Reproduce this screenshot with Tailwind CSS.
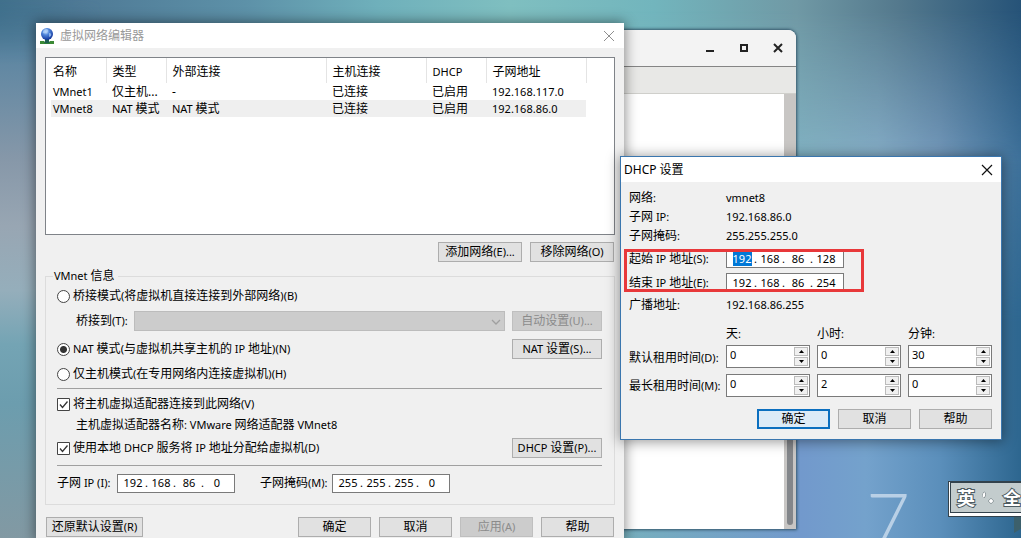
<!DOCTYPE html>
<html lang="zh-CN">
<head>
<meta charset="utf-8">
<meta name="viewport" content="width=device-width, initial-scale=1">
<title>虚拟网络编辑器</title>
<script src="https://cdn.jsdelivr.net/npm/@tailwindcss/browser@4"></script>
</head>
<body class="relative h-screen overflow-hidden bg-[#6f9db5] font-['Noto_Sans','Noto_Sans_CJK_SC',sans-serif] text-xs leading-4 text-black">

<!-- wallpaper -->
<div class="absolute inset-0 bg-[linear-gradient(90deg,#40708c_0%,#4f7a96_8%,#5d91a8_24%,#6fb0bb_37%,#7fbfc0_50%,#72b5bd_64%,#7099a5_78%,#54798d_88%,#265378_100%)]"></div>
<div class="absolute inset-0 bg-[linear-gradient(180deg,#40708c_0%,#5d86a2_10%,#8798a9_30%,#98a6b3_42%,#95aebb_54%,#74a4b4_64%,#6c9dae_75%,#8299a3_100%)] [mask-image:linear-gradient(180deg,transparent_0%,black_12%),linear-gradient(90deg,black_0%,black_4%,transparent_10%)] [mask-composite:intersect]"></div>
<div class="absolute inset-y-0 right-0 w-2/5 bg-[linear-gradient(90deg,#7ab4c0_30%,#82b0c2_50%,#84acc6_65%,#7398ba_80%,#3e719a_100%)] [mask-image:linear-gradient(180deg,transparent_2%,black_30%)]"></div>
<div class="absolute inset-y-0 right-0 w-2/5 bg-[linear-gradient(90deg,#76b0bc_0%,#7299cc_46%,#74a2cc_62%,#5b8fbb_80%,#2d668f_100%)] [mask-image:linear-gradient(180deg,transparent_30%,black_60%)]"></div>
<div aria-hidden="true" class="absolute top-[482px] left-[866px] font-[Lato] text-[76px] leading-[76px] font-light text-[#b9d0e6]">7</div>

<!-- terminal window in the background -->
<section class="absolute top-[30px] left-[560px] flex h-[499px] w-[236px] flex-col overflow-hidden rounded-tr-lg bg-white shadow-[0_0_3px_1px_#33556a]">
  <header class="flex h-9 shrink-0 items-center justify-end gap-6 bg-[#f3f3f3] pr-[13px]">
    <button aria-label="最小化" class="size-2.5"><svg viewBox="0 0 10 10" class="size-2.5"><path d="M1 8h8" stroke="#222" stroke-width="2"/></svg></button>
    <button aria-label="最大化" class="size-2.5"><svg viewBox="0 0 10 10" class="size-2.5"><path d="M2 2h6v6H2z" fill="none" stroke="#222" stroke-width="2"/></svg></button>
    <button aria-label="关闭窗口" class="size-2.5"><svg viewBox="0 0 10 10" class="size-2.5"><path d="M1 1l8 8M9 1l-8 8" stroke="#222" stroke-width="2"/></svg></button>
  </header>
  <div class="h-7 shrink-0 border-t border-b border-t-[#858585] border-b-[#cfcfcb] bg-[#e8e8e6]"></div>
  <div class="flex grow justify-end">
    <div class="flex w-3 items-end justify-center bg-[#c8c6c4] pb-1"><div class="h-24 w-1.5 rounded-full bg-[#83868a]"></div></div>
  </div>
</section>

<!-- virtual network editor -->
<main class="absolute top-[23px] left-9 w-[588px] bg-[#f0f0f0] shadow-[0_0_12px_1px_rgba(0,0,0,0.45)]">
  <header class="flex h-[25px] items-center bg-white pr-[9px] pl-[3px] text-[#999]">
    <svg viewBox="0 0 16 18" class="mr-[5px] h-[18px] w-4"><defs><radialGradient id="g" cx=".4" cy=".3" r=".7"><stop offset="0" stop-color="#d8ecff"/><stop offset=".4" stop-color="#4f86dc"/><stop offset="1" stop-color="#10349a"/></radialGradient></defs><path d="M1 14.500h14v2.500H1z" fill="#2f7d3a"/><path d="M6 12h4v4H6z" fill="#1d5f50"/><path d="M1 14h4v3H1zM11 14h4v3h-4z" fill="#3c8a35"/><circle cx="8" cy="7" r="6" fill="url(#g)"/><path d="M5 3q3-2 4 0T6 6 5 3M10 6q3 0 2 3l-2 1z" fill="#a9cdf8" opacity=".7"/></svg>
    <h1 class="grow">虚拟网络编辑器</h1>
    <button aria-label="关闭"><svg viewBox="0 0 12 12" class="size-3"><path d="M1 1l10 10M11 1L1 11" stroke="#8f8f8f"/></svg></button>
  </header>

  <div class="px-[9px] pt-[9px]">
    <div class="h-[178px] border border-[#7f8388] bg-white pl-[5px]">
      <table class="w-[535px] table-fixed text-left">
        <colgroup><col class="w-[55px]"><col class="w-[60px]"><col class="w-[160px]"><col class="w-[100px]"><col class="w-[60px]"><col class="w-[100px]"></colgroup>
        <thead>
          <tr class="h-[25px] *:border-r *:border-[#e4e4e4] *:p-0 *:pt-0.5 *:pl-1.5 *:font-normal">
            <th class="!pl-0.5">名称</th><th>类型</th><th>外部连接</th><th>主机连接</th><th class="text-[11px]">DHCP</th><th>子网地址</th>
          </tr>
        </thead>
        <tbody class="whitespace-nowrap">
          <tr class="h-[17px] *:p-0 *:pl-1.5">
            <td class="!pl-0.5 text-[11px]">VMnet1</td><td>仅主机...</td><td>-</td><td>已连接</td><td>已启用</td><td class="text-[11px]">192.168.117.0</td>
          </tr>
          <tr class="h-[17px] bg-[#efefef] *:p-0 *:pl-1.5">
            <td class="!pl-0.5 text-[11px]">VMnet8</td><td><span class="text-[11px]">NAT </span>模式</td><td><span class="text-[11px]">NAT </span>模式</td><td>已连接</td><td>已启用</td><td class="text-[11px]">192.168.86.0</td>
          </tr>
        </tbody>
      </table>
    </div>

    <div class="mt-[7px] flex justify-end gap-2 pr-px">
      <button class="h-5 w-[84px] border border-[#adadad] bg-[#e1e1e1]">添加网络<span class="text-[11px]">(E)...</span></button>
      <button class="h-5 w-[84px] border border-[#adadad] bg-[#e1e1e1]">移除网络<span class="text-[11px]">(O)</span></button>
    </div>

    <fieldset class="mt-1.5 border border-[#dcdcdc] pr-3 pb-[11px] pl-[11px]">
      <legend class="-ml-1 h-4 pr-1 pl-px"><span class="text-[11px]">VMnet </span>信息</legend>
      <label class="mt-0.5 flex h-5 items-center gap-[3px]">
        <input type="radio" name="mode" class="size-[13px] appearance-none rounded-full border border-[#444] bg-white">
        <span>桥接模式<span class="text-[11px]">(</span>将虚拟机直接连接到外部网络<span class="text-[11px]">)(B)</span></span>
      </label>
      <div class="mt-[5px] flex h-5 items-center">
        <label for="bridge" class="w-[77px] pl-[19px]">桥接到<span class="text-[11px]">(T):</span></label>
        <div class="relative mr-[7px] h-5 grow">
          <select id="bridge" disabled class="h-5 w-full appearance-none border border-[#bcbcbc] bg-[#cccccc] opacity-100"><option></option></select>
          <svg viewBox="0 0 10 6" class="absolute top-2 right-1 h-1.5 w-2.5"><path d="M1 1l4 4 4-4" fill="none" stroke="#a0a0a0" stroke-width="1.300"/></svg>
        </div>
        <button disabled class="h-5 w-[90px] border border-[#bfbfbf] bg-[#cccccc] text-[#8b8b8b]">自动设置<span class="text-[11px]">(U)...</span></button>
      </div>
      <div class="mt-2 flex h-5 items-center justify-between">
        <label class="flex items-center gap-[3px]">
          <input type="radio" name="mode" checked class="size-[13px] appearance-none rounded-full border border-[#444] bg-white bg-[radial-gradient(circle,#333_3px,transparent_4px)]">
          <span><span class="text-[11px]">NAT </span>模式<span class="text-[11px]">(</span>与虚拟机共享主机的<span class="text-[11px]"> IP </span>地址<span class="text-[11px]">)(N)</span></span>
        </label>
        <button class="h-5 w-[90px] border border-[#adadad] bg-[#e1e1e1]"><span class="text-[11px]">NAT </span>设置<span class="text-[11px]">(S)...</span></button>
      </div>
      <label class="mt-[5px] flex h-5 items-center gap-[3px]">
        <input type="radio" name="mode" class="size-[13px] appearance-none rounded-full border border-[#444] bg-white">
        <span>仅主机模式<span class="text-[11px]">(</span>在专用网络内连接虚拟机<span class="text-[11px]">)(H)</span></span>
      </label>
      <hr class="mt-1 border-[#a0a0a0]">
      <label class="mt-[5px] flex h-5 items-center gap-[3px]">
        <input type="checkbox" checked class="peer sr-only">
        <svg viewBox="0 0 13 13" class="size-[13px]"><path d="M.5.5h12v12H.5z" fill="#fff" stroke="#444"/><path d="M3 6.500l2.500 3L10.500 3.500" fill="none" stroke="#333" stroke-width="1.300"/></svg>
        <span>将主机虚拟适配器连接到此网络<span class="text-[11px]">(V)</span></span>
      </label>
      <p class="mt-px h-5 pl-[19px] leading-5">主机虚拟适配器名称<span class="text-[11px]">: VMware </span>网络适配器<span class="text-[11px]"> VMnet8</span></p>
      <div class="mt-[3px] flex h-5 items-center justify-between">
        <label class="flex items-center gap-[3px]">
          <input type="checkbox" checked class="peer sr-only">
          <svg viewBox="0 0 13 13" class="size-[13px]"><path d="M.5.5h12v12H.5z" fill="#fff" stroke="#444"/><path d="M3 6.500l2.500 3L10.500 3.500" fill="none" stroke="#333" stroke-width="1.300"/></svg>
          <span>使用本地<span class="text-[11px]"> DHCP </span>服务将<span class="text-[11px]"> IP </span>地址分配给虚拟机<span class="text-[11px]">(D)</span></span>
        </label>
        <button class="h-5 w-[90px] border border-[#adadad] bg-[#e1e1e1]"><span class="text-[11px]">DHCP </span>设置<span class="text-[11px]">(P)...</span></button>
      </div>
      <hr class="mt-[7px] border-[#a0a0a0]">
      <div class="mt-[7px] flex h-5 items-center">
        <span class="w-[60px]">子网<span class="text-[11px]"> IP (I):</span></span>
        <div role="group" aria-label="子网 IP" class="flex h-[19px] w-[118px] items-center border border-[#7a7a7a] bg-white pl-[3px] text-[11px]">
          <input aria-label="1" value="192" class="w-6 text-center"><span class="w-1">.</span><input aria-label="2" value="168" class="w-6 text-center"><span class="w-1">.</span><input aria-label="3" value="86" class="w-6 text-center"><span class="w-1">.</span><input aria-label="4" value="0" class="w-6 text-center">
        </div>
        <span class="ml-[25px] w-[72px]">子网掩码<span class="text-[11px]">(M):</span></span>
        <div role="group" aria-label="子网掩码" class="flex h-[19px] w-[118px] items-center border border-[#7a7a7a] bg-white pl-[3px] text-[11px]">
          <input aria-label="1" value="255" class="w-6 text-center"><span class="w-1">.</span><input aria-label="2" value="255" class="w-6 text-center"><span class="w-1">.</span><input aria-label="3" value="255" class="w-6 text-center"><span class="w-1">.</span><input aria-label="4" value="0" class="w-6 text-center">
        </div>
      </div>
    </fieldset>

    <div class="mt-3 flex gap-2 px-px">
      <button class="mr-auto h-5 w-[97px] border border-[#adadad] bg-[#e1e1e1]">还原默认设置<span class="text-[11px]">(R)</span></button>
      <button class="h-5 w-[73px] border border-[#adadad] bg-[#e1e1e1]">确定</button>
      <button class="h-5 w-[73px] border border-[#adadad] bg-[#e1e1e1]">取消</button>
      <button disabled class="h-5 w-[73px] border border-[#bfbfbf] bg-[#cccccc] text-[#8b8b8b]">应用<span class="text-[11px]">(A)</span></button>
      <button class="h-5 w-[73px] border border-[#adadad] bg-[#e1e1e1]">帮助</button>
    </div>
  </div>
  <div class="h-1"></div>
</main>

<!-- DHCP settings -->
<section class="absolute top-[156px] left-[620px] w-[382px] border border-[#3a76ae] bg-[#f0f0f0] shadow-[0_1px_12px_1px_rgba(0,0,0,0.4)]">
  <header class="flex h-[25px] items-center justify-between bg-white pr-2 pl-[3px]">
    <h2>DHCP 设置</h2>
    <button aria-label="关闭"><svg viewBox="0 0 12 12" class="size-3"><path d="M1 1l10 10M11 1L1 11" stroke="#111" stroke-width="1.200"/></svg></button>
  </header>
  <div class="pt-1.5 pr-[9px] pb-[10px] pl-2">
    <dl class="grid grid-cols-[97px_1fr] leading-[19px]">
      <dt>网络<span class="text-[11px]">:</span></dt><dd class="text-[11px]">vmnet8</dd>
      <dt>子网<span class="text-[11px]"> IP:</span></dt><dd class="text-[11px]">192.168.86.0</dd>
      <dt>子网掩码<span class="text-[11px]">:</span></dt><dd class="text-[11px]">255.255.255.0</dd>
    </dl>
    <div class="relative mt-1 grid grid-cols-[97px_1fr] items-center gap-y-[5px]">
      <span>起始<span class="text-[11px]"> IP </span>地址<span class="text-[11px]">(S):</span></span>
      <div role="group" aria-label="起始 IP 地址" class="flex h-[19px] w-[118px] items-center border border-[#7a7a7a] bg-white pl-[3px] text-[11px]">
        <div class="flex w-6 justify-center"><input aria-label="1" value="192" class="h-3.5 w-[19px] bg-[#0078d7] text-center text-white"></div><span class="w-1">.</span><input aria-label="2" value="168" class="w-6 text-center"><span class="w-1">.</span><input aria-label="3" value="86" class="w-6 text-center"><span class="w-1">.</span><input aria-label="4" value="128" class="w-6 text-center">
      </div>
      <span>结束<span class="text-[11px]"> IP </span>地址<span class="text-[11px]">(E):</span></span>
      <div role="group" aria-label="结束 IP 地址" class="flex h-[19px] w-[118px] items-center border border-[#7a7a7a] bg-white pl-[3px] text-[11px]">
        <input aria-label="1" value="192" class="w-6 text-center"><span class="w-1">.</span><input aria-label="2" value="168" class="w-6 text-center"><span class="w-1">.</span><input aria-label="3" value="86" class="w-6 text-center"><span class="w-1">.</span><input aria-label="4" value="254" class="w-6 text-center">
      </div>
      <div class="pointer-events-none absolute top-0 -left-[5px] h-[43px] w-[240px] border-3 border-[#e8383a]"></div>
    </div>
    <dl class="mt-[3px] grid grid-cols-[97px_1fr] leading-[19px]">
      <dt>广播地址<span class="text-[11px]">:</span></dt><dd class="text-[11px]">192.168.86.255</dd>
    </dl>
    <div class="mt-3 grid grid-cols-[97px_91px_91px_84px] items-center gap-y-1.5">
      <span></span><span>天<span class="text-[11px]">:</span></span><span>小时<span class="text-[11px]">:</span></span><span>分钟<span class="text-[11px]">:</span></span>

      <span>默认租用时间<span class="text-[11px]">(D):</span></span>
      <div class="-mt-[3px] flex h-[23px] w-[84px] border border-[#7a7a7a] bg-white p-px"><input aria-label="默认 天" value="0" class="h-4 w-full min-w-0 pl-0.5 text-[11px]"><span class="grid w-3.5 shrink-0 gap-px"><button aria-label="增加" class="grid place-items-center border border-[#bbb] bg-[#f0f0f0]"><svg viewBox="0 0 5 3" class="h-[3px] w-[5px]"><path d="M0 3L2.500 0 5 3z"/></svg></button><button aria-label="减少" class="grid place-items-center border border-[#bbb] bg-[#f0f0f0]"><svg viewBox="0 0 5 3" class="h-[3px] w-[5px]"><path d="M0 0h5L2.500 3z"/></svg></button></span></div>
      <div class="-mt-[3px] flex h-[23px] w-[84px] border border-[#7a7a7a] bg-white p-px"><input aria-label="默认 小时" value="0" class="h-4 w-full min-w-0 pl-0.5 text-[11px]"><span class="grid w-3.5 shrink-0 gap-px"><button aria-label="增加" class="grid place-items-center border border-[#bbb] bg-[#f0f0f0]"><svg viewBox="0 0 5 3" class="h-[3px] w-[5px]"><path d="M0 3L2.500 0 5 3z"/></svg></button><button aria-label="减少" class="grid place-items-center border border-[#bbb] bg-[#f0f0f0]"><svg viewBox="0 0 5 3" class="h-[3px] w-[5px]"><path d="M0 0h5L2.500 3z"/></svg></button></span></div>
      <div class="-mt-[3px] flex h-[23px] w-[84px] border border-[#7a7a7a] bg-white p-px"><input aria-label="默认 分钟" value="30" class="h-4 w-full min-w-0 pl-0.5 text-[11px]"><span class="grid w-3.5 shrink-0 gap-px"><button aria-label="增加" class="grid place-items-center border border-[#bbb] bg-[#f0f0f0]"><svg viewBox="0 0 5 3" class="h-[3px] w-[5px]"><path d="M0 3L2.500 0 5 3z"/></svg></button><button aria-label="减少" class="grid place-items-center border border-[#bbb] bg-[#f0f0f0]"><svg viewBox="0 0 5 3" class="h-[3px] w-[5px]"><path d="M0 0h5L2.500 3z"/></svg></button></span></div>

      <span>最长租用时间<span class="text-[11px]">(M):</span></span>
      <div class="flex h-[23px] w-[84px] border border-[#7a7a7a] bg-white p-px"><input aria-label="最长 天" value="0" class="h-4 w-full min-w-0 pl-0.5 text-[11px]"><span class="grid w-3.5 shrink-0 gap-px"><button aria-label="增加" class="grid place-items-center border border-[#bbb] bg-[#f0f0f0]"><svg viewBox="0 0 5 3" class="h-[3px] w-[5px]"><path d="M0 3L2.500 0 5 3z"/></svg></button><button aria-label="减少" class="grid place-items-center border border-[#bbb] bg-[#f0f0f0]"><svg viewBox="0 0 5 3" class="h-[3px] w-[5px]"><path d="M0 0h5L2.500 3z"/></svg></button></span></div>
      <div class="flex h-[23px] w-[84px] border border-[#7a7a7a] bg-white p-px"><input aria-label="最长 小时" value="2" class="h-4 w-full min-w-0 pl-0.5 text-[11px]"><span class="grid w-3.5 shrink-0 gap-px"><button aria-label="增加" class="grid place-items-center border border-[#bbb] bg-[#f0f0f0]"><svg viewBox="0 0 5 3" class="h-[3px] w-[5px]"><path d="M0 3L2.500 0 5 3z"/></svg></button><button aria-label="减少" class="grid place-items-center border border-[#bbb] bg-[#f0f0f0]"><svg viewBox="0 0 5 3" class="h-[3px] w-[5px]"><path d="M0 0h5L2.500 3z"/></svg></button></span></div>
      <div class="flex h-[23px] w-[84px] border border-[#7a7a7a] bg-white p-px"><input aria-label="最长 分钟" value="0" class="h-4 w-full min-w-0 pl-0.5 text-[11px]"><span class="grid w-3.5 shrink-0 gap-px"><button aria-label="增加" class="grid place-items-center border border-[#bbb] bg-[#f0f0f0]"><svg viewBox="0 0 5 3" class="h-[3px] w-[5px]"><path d="M0 3L2.500 0 5 3z"/></svg></button><button aria-label="减少" class="grid place-items-center border border-[#bbb] bg-[#f0f0f0]"><svg viewBox="0 0 5 3" class="h-[3px] w-[5px]"><path d="M0 0h5L2.500 3z"/></svg></button></span></div>
    </div>
    <div class="mt-3 flex justify-end gap-2">
      <button class="h-5 w-[73px] border-2 border-[#0b6fbf] bg-[#dcebf7]">确定</button>
      <button class="h-5 w-[73px] border border-[#adadad] bg-[#e1e1e1]">取消</button>
      <button class="h-5 w-[73px] border border-[#adadad] bg-[#e1e1e1]">帮助</button>
    </div>
  </div>
</section>

<!-- input method bar -->
<div class="absolute top-[481px] left-[948px] w-[90px]">
  <div class="border border-[#33424c] bg-white pb-[3px] pl-px">
    <div class="flex h-[31px] items-center gap-1 border border-[#33424c] bg-[#c3cccd] pl-1.5 text-[18px] font-bold text-white [paint-order:stroke_fill] [-webkit-text-stroke:2px_#4c5a60]">
      <span>英</span><svg viewBox="0 0 16 16" class="size-4"><path d="M5 2q3 1 0 6-3-2 0-6z" fill="#fff" stroke="#4c5a60"/><circle cx="12" cy="11" r="2" fill="#fff" stroke="#4c5a60"/></svg><span class="ml-1">全</span>
    </div>
  </div>
  <svg viewBox="0 0 10 16" class="ml-[66px] h-4 w-2.5"><path d="M0 0h10v10L0 16z" fill="#3c606c"/></svg>
</div>
</body>
</html>
